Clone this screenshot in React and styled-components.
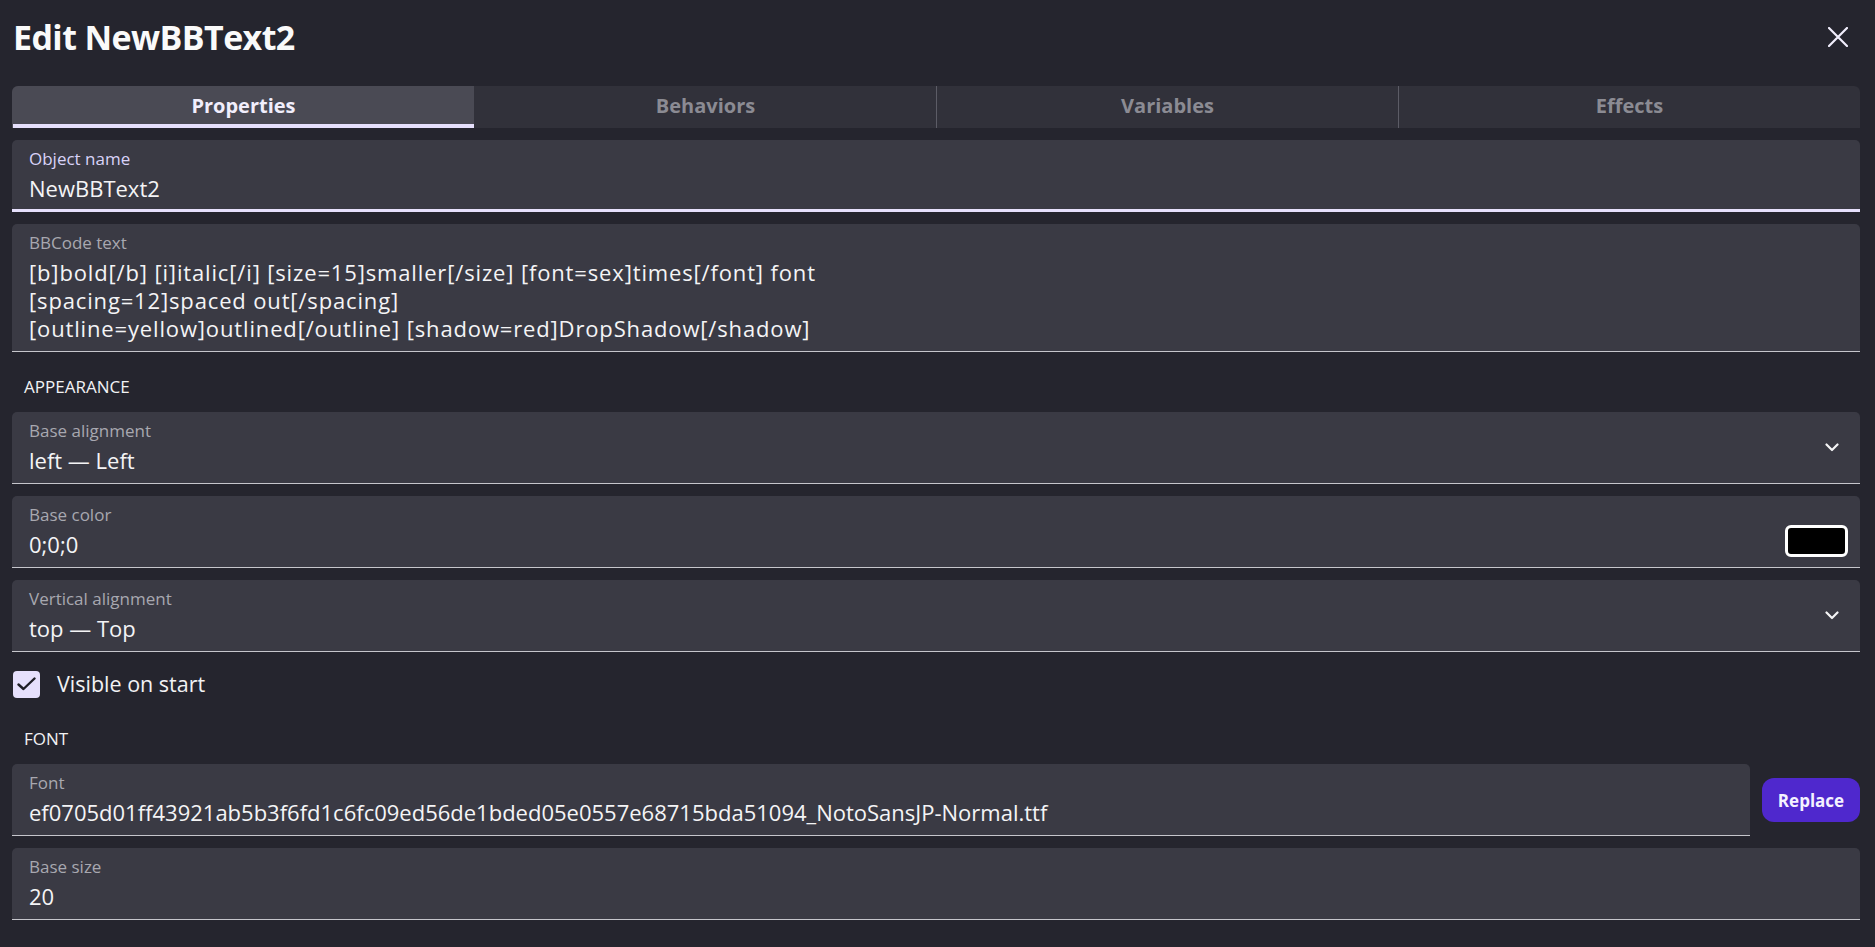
import React from "react";
import styled, { createGlobalStyle } from "styled-components";

const GlobalStyle = createGlobalStyle`
  html, body {
    margin: 0;
    padding: 0;
    background: #25252e;
  }
  body {
    font-family: "Open Sans", "Noto Sans", sans-serif;
    color: #f4f4f6;
    -webkit-font-smoothing: antialiased;
  }
  * { box-sizing: border-box; }
`;

const Page = styled.div`
  min-height: 100vh;
  padding: 0 15px 0 12px;
  display: flex;
  flex-direction: column;
  gap: 12px;
`;

const Header = styled.header`
  height: 74px;
  display: flex;
  align-items: center;
  justify-content: space-between;
`;

const Title = styled.h1`
  margin: 0;
  padding-left: 1px;
  font-size: 34px;
  line-height: 46px;
  font-weight: 700;
  letter-spacing: -0.6px;
  color: #fafafa;
`;

const CloseButton = styled.button`
  width: 44px;
  height: 44px;
  padding: 0;
  border: 0;
  background: transparent;
  display: flex;
  align-items: center;
  justify-content: center;
  cursor: pointer;
`;

const TabBar = styled.div`
  display: grid;
  grid-template-columns: repeat(4, 1fr);
  height: 42px;
  background: #31313a;
  border-radius: 6px 6px 0 0;
  overflow: hidden;
`;

const Tab = styled.button`
  height: 42px;
  padding: 0 0 3px;
  border: 0;
  border-left: 1px solid ${(p) => (p.$divider ? "#5c5c66" : "transparent")};
  background: ${(p) => (p.$active ? "#4a4a54" : "transparent")};
  box-shadow: ${(p) => (p.$active ? "inset 0 -4px 0 #e6e0fc" : "none")};
  font-family: inherit;
  font-size: 20px;
  line-height: 24px;
  font-weight: 700;
  text-align: center;
  color: ${(p) => (p.$active ? "#f1eefc" : "#8b8b93")};
  cursor: pointer;
`;

const Field = styled.div`
  display: flex;
  align-items: center;
  gap: 12px;
  padding: 9px 12px ${(p) => (p.$focused ? "7px" : "9px")} 17px;
  background: #3a3a44;
  border-radius: 5px 5px 0 0;
  border-bottom: ${(p) => (p.$focused ? "3px solid #e6e0fc" : "1px solid #c6c6cc")};
  flex: ${(p) => (p.$grow ? "1" : "none")};
  min-width: 0;
`;

const FieldBody = styled.div`
  flex: 1;
  min-width: 0;
  display: flex;
  flex-direction: column;
`;

const Label = styled.label`
  font-size: 17px;
  line-height: 20px;
  color: ${(p) => (p.$focused ? "#d9d3f8" : "#a8a8b0")};
`;

const Value = styled.div`
  margin-top: 5px;
  font-size: 22px;
  line-height: 28px;
  letter-spacing: ${(p) => (p.$code ? "0.85px" : "0")};
  color: #f4f4f6;
  white-space: pre;
  overflow: hidden;
`;

const Chevron = styled.svg`
  width: 14px;
  height: 9px;
  margin-right: 9px;
  flex: none;
`;

const Swatch = styled.div`
  align-self: flex-end;
  flex: none;
  width: 63px;
  height: 32px;
  margin-bottom: 1px;
  background: #000;
  border: 3px solid #fff;
  border-radius: 6px;
`;

const SectionTitle = styled.div`
  height: 36px;
  padding: 13px 12px 3px;
  font-size: 17px;
  line-height: 20px;
  color: #f2f2f4;
`;

const CheckRow = styled.label`
  height: 40px;
  display: flex;
  align-items: center;
  gap: 17px;
  padding-left: 1px;
  font-size: 21.5px;
  line-height: 28px;
  color: #f2f2f4;
`;

const CheckBox = styled.span`
  width: 27px;
  height: 27px;
  border-radius: 4px;
  background: #e6e0fc;
  display: flex;
  align-items: center;
  justify-content: center;
`;

const FieldRow = styled.div`
  display: flex;
  align-items: center;
  gap: 12px;
`;

const PrimaryButton = styled.button`
  width: 98px;
  height: 44px;
  border: 0;
  border-radius: 12px;
  background: #4f28cd;
  color: #f4f1ff;
  font-family: inherit;
  font-size: 17px;
  font-weight: 700;
  cursor: pointer;
`;

const ChevronIcon = () => (
  <Chevron viewBox="0 0 14 9">
    <path d="M1.5 1.5 L7 7 L12.5 1.5" fill="none" stroke="#f4f4f6" strokeWidth="2.2" strokeLinecap="round" strokeLinejoin="round" />
  </Chevron>
);

const TextField = ({ label, value, focused, children, grow, code }) => (
  <Field $focused={focused} $grow={grow}>
    <FieldBody>
      <Label $focused={focused}>{label}</Label>
      <Value $code={code}>{value}</Value>
    </FieldBody>
    {children}
  </Field>
);

const tabs = ["Properties", "Behaviors", "Variables", "Effects"];

export default function App() {
  const active = 0;
  return (
    <>
      <GlobalStyle />
      <Page>
        <Header>
          <Title>Edit NewBBText2</Title>
          <CloseButton aria-label="Close">
            <svg width="20" height="20" viewBox="0 0 20 20">
              <path d="M1 1 L19 19 M19 1 L1 19" stroke="#f1eefc" strokeWidth="2.2" strokeLinecap="round" />
            </svg>
          </CloseButton>
        </Header>

        <TabBar>
          {tabs.map((t, i) => (
            <Tab key={t} $active={i === active} $divider={i > 0 && i !== active && i - 1 !== active}>
              {t}
            </Tab>
          ))}
        </TabBar>

        <TextField label="Object name" value="NewBBText2" focused />
        <TextField
          code
          label="BBCode text"
          value={
            "[b]bold[/b] [i]italic[/i] [size=15]smaller[/size] [font=sex]times[/font] font\n[spacing=12]spaced out[/spacing]\n[outline=yellow]outlined[/outline] [shadow=red]DropShadow[/shadow]"
          }
        />

        <SectionTitle>APPEARANCE</SectionTitle>
        <TextField label="Base alignment" value="left — Left">
          <ChevronIcon />
        </TextField>
        <TextField label="Base color" value="0;0;0">
          <Swatch />
        </TextField>
        <TextField label="Vertical alignment" value="top — Top">
          <ChevronIcon />
        </TextField>

        <CheckRow>
          <CheckBox>
            <svg width="19" height="14" viewBox="0 0 19 14">
              <path d="M1.5 7.5 L6.5 12 L17.5 1.5" fill="none" stroke="#1f1f27" strokeWidth="2.4" strokeLinecap="round" strokeLinejoin="round" />
            </svg>
          </CheckBox>
          Visible on start
        </CheckRow>

        <SectionTitle>FONT</SectionTitle>
        <FieldRow>
          <TextField
            grow
            label="Font"
            value="ef0705d01ff43921ab5b3f6fd1c6fc09ed56de1bded05e0557e68715bda51094_NotoSansJP-Normal.ttf"
          />
          <PrimaryButton>Replace</PrimaryButton>
        </FieldRow>
        <TextField label="Base size" value="20" />
      </Page>
    </>
  );
}
